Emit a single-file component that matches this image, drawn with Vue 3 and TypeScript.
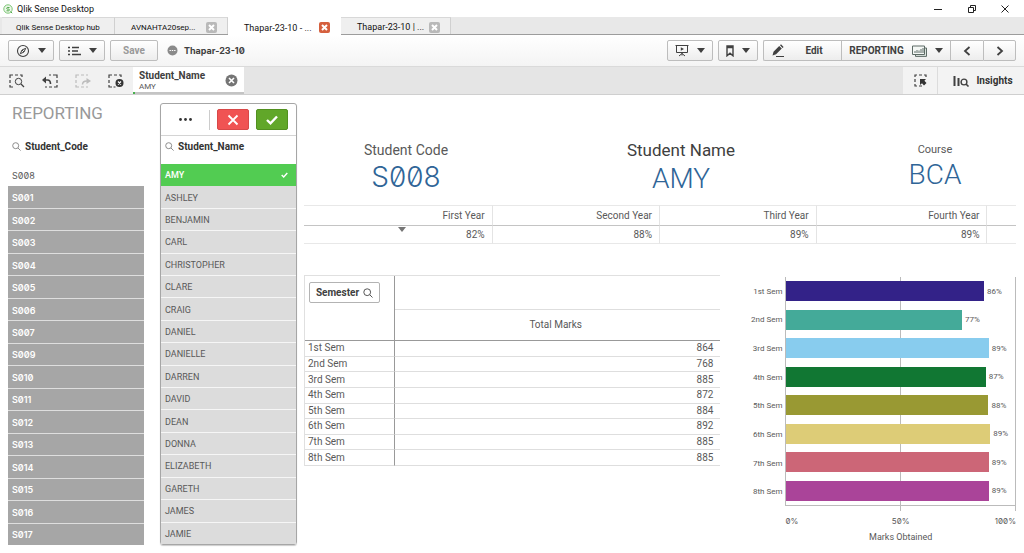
<script setup lang="ts">
interface Tab { label: string; closable: boolean; active: boolean }
interface Semester { name: string; marks: number; percent: string; color: string }

const tabs: Tab[] = [
  { label: 'Qlik Sense Desktop hub', closable: false, active: false },
  { label: 'AVNAHTA20sep...', closable: true, active: false },
  { label: 'Thapar-23-10 - ...', closable: true, active: true },
  { label: 'Thapar-23-10 | ...', closable: true, active: false },
]

const codes: string[] = [
  'S008', 'S001', 'S002', 'S003', 'S004', 'S005', 'S006', 'S007', 'S009',
  'S010', 'S011', 'S012', 'S013', 'S014', 'S015', 'S016', 'S017',
]

const names: string[] = [
  'AMY', 'ASHLEY', 'BENJAMIN', 'CARL', 'CHRISTOPHER', 'CLARE', 'CRAIG', 'DANIEL', 'DANIELLE',
  'DARREN', 'DAVID', 'DEAN', 'DONNA', 'ELIZABETH', 'GARETH', 'JAMES', 'JAMIE',
]

const kpis = [
  { label: 'Student Code', value: 'S008', kind: 'code' },
  { label: 'Student Name', value: 'AMY', kind: 'name' },
  { label: 'Course', value: 'BCA', kind: 'course' },
]

const years = [
  { label: 'First Year', value: '82%' },
  { label: 'Second Year', value: '88%' },
  { label: 'Third Year', value: '89%' },
  { label: 'Fourth Year', value: '89%' },
]

const semesters: Semester[] = [
  { name: '1st Sem', marks: 864, percent: '86%', color: '#332288' },
  { name: '2nd Sem', marks: 768, percent: '77%', color: '#44aa99' },
  { name: '3rd Sem', marks: 885, percent: '89%', color: '#88ccee' },
  { name: '4th Sem', marks: 872, percent: '87%', color: '#117733' },
  { name: '5th Sem', marks: 884, percent: '88%', color: '#999933' },
  { name: '6th Sem', marks: 892, percent: '89%', color: '#ddcc77' },
  { name: '7th Sem', marks: 885, percent: '89%', color: '#cc6677' },
  { name: '8th Sem', marks: 885, percent: '89%', color: '#aa4499' },
]
</script>

<template>
  <div class="app">
    <header class="titlebar">
      <svg class="logo" width="10" height="10" viewBox="0 0 10 10" aria-hidden="true">
        <circle cx="5" cy="5" r="4.2" fill="#eef8ea" stroke="#7cc576" />
        <path d="M6.5 3.5H4.2a.9.9 0 0 0 0 1.6h1.6a.9.9 0 0 1 0 1.7H3.5M7.6 7.6l1.6 1.6" fill="none" stroke="#4fa84a" />
      </svg>
      <span class="app-name">Qlik Sense Desktop</span>
      <div class="window-controls">
        <button type="button" aria-label="Minimize">
          <svg width="10" height="10" viewBox="0 0 10 10"><path d="M1 5.5h8" stroke="#222" /></svg>
        </button>
        <button type="button" aria-label="Restore">
          <svg width="10" height="10" viewBox="0 0 10 10"><path d="M1.5 3.5h5v5h-5zM3.5 3.5v-2h5v5h-2" fill="none" stroke="#222" /></svg>
        </button>
        <button type="button" aria-label="Close">
          <svg width="10" height="10" viewBox="0 0 10 10"><path d="M1.5 1.5l7 7M8.5 1.5l-7 7" stroke="#222" /></svg>
        </button>
      </div>
    </header>

    <nav class="tabs" aria-label="Open apps">
      <div v-for="tab in tabs" :key="tab.label" class="tab" :class="{ active: tab.active }">
        <button type="button" class="tab-label">{{ tab.label }}</button>
        <button v-if="tab.closable" type="button" class="tab-close" aria-label="Close tab">
          <svg width="7" height="7" viewBox="0 0 7 7"><path d="M1 1l5 5M6 1L1 6" stroke="#fff" stroke-width="2" /></svg>
        </button>
      </div>
    </nav>

    <div class="toolbar">
      <button type="button" class="tool w46" aria-label="Navigation">
        <svg width="14" height="14" viewBox="0 0 14 14" fill="none" stroke="#404040">
          <circle cx="7" cy="7" r="5.5" stroke-width="1.1" />
          <path d="M9.7 4.3L8 8 4.3 9.7 6 6z" /><path d="M6 6l2 2" />
        </svg>
        <i class="caret" />
      </button>
      <button type="button" class="tool w46" aria-label="Menu">
        <svg width="13" height="10" viewBox="0 0 13 10">
          <path d="M0 1.5h2M0 5h2M0 8.5h2M4 1.5h7M4 5h6M4 8.5h9" stroke="#404040" stroke-width="1.6" />
        </svg>
        <i class="caret" />
      </button>
      <button type="button" class="tool w48 save" disabled>Save</button>
      <svg class="status" width="11" height="11" viewBox="0 0 11 11" aria-hidden="true">
        <circle cx="5.5" cy="5.5" r="5" fill="#8a8a8a" />
        <path d="M2.5 5.5h1.4M4.8 5.5h1.4M7.1 5.5h1.4" stroke="#fff" stroke-width="1.2" />
      </svg>
      <h1 class="doc-name">Thapar-23-10</h1>

      <button type="button" class="tool w46 push" aria-label="Storytelling">
        <svg width="14" height="13" viewBox="0 0 14 13" fill="none" stroke="#404040">
          <path d="M.5 1.5h13M1.5 1.5v7h11v-7M7 8.500v3M4 12l3-2.5L10 12" />
          <path d="M5.8 3.2v3.6L9 5z" fill="#404040" stroke="none" />
        </svg>
        <i class="caret" />
      </button>
      <button type="button" class="tool w40" aria-label="Bookmarks">
        <svg width="8" height="12" viewBox="0 0 8 12"><path d="M1 1h6v9.8L4 8.2 1 10.8zM1 2.5h6" fill="none" stroke="#404040" stroke-width="1.4" /></svg>
        <i class="caret" />
      </button>
      <div class="group">
        <button type="button" class="tool edit">
          <svg width="13" height="13" viewBox="0 0 13 13">
            <path d="M.5 11.5l1-3.8 5.7-5.7 2.600 2.600L4.100 10.300zM8 1.300l1-1 2.600 2.600-1 1z" fill="#404040" />
            <path d="M4 12.500h8" stroke="#404040" />
          </svg>
          <span>Edit</span>
        </button>
        <button type="button" class="tool sheet">
          <span>REPORTING</span>
          <svg width="15" height="12" viewBox="0 0 15 12" fill="none" stroke="#5d6b66">
            <path d="M3.5 9.5v1.9h11V3h-2" fill="#dde5e0" />
            <path d="M.5 1h12v8.5H.5z" fill="#f4f7f5" />
            <path d="M3 8V6M5 8V5M7 8V5.5M9 8V4M11 8V3" />
          </svg>
          <i class="caret" />
        </button>
        <button type="button" class="tool step" aria-label="Previous sheet">
          <svg width="8" height="10" viewBox="0 0 8 10"><path d="M6.5 1L2 5l4.5 4" fill="none" stroke="#404040" stroke-width="1.8" /></svg>
        </button>
        <button type="button" class="tool step" aria-label="Next sheet">
          <svg width="8" height="10" viewBox="0 0 8 10"><path d="M1.5 1L6 5 1.5 9" fill="none" stroke="#404040" stroke-width="1.8" /></svg>
        </button>
      </div>
    </div>

    <div class="selections">
      <div class="sel-tools">
        <button type="button" aria-label="Selections search">
          <svg width="16" height="14" viewBox="0 0 16 14" fill="none" stroke="#404040">
            <path d="M1 4V1h3M6 1h3M11 1h2v2M1 6v3M1 11v2h3" stroke-width="1.2" />
            <circle cx="9.5" cy="7.5" r="3.2" /><path d="M12 10l3 3" stroke-width="1.3" />
          </svg>
        </button>
        <button type="button" aria-label="Step back">
          <svg width="16" height="14" viewBox="0 0 16 14" fill="none" stroke="#404040">
            <path d="M7 1h2M11 1h4v3M15 6v3M15 11v2h-3M10 13H7M5 13H3" stroke-width="1.2" />
            <path d="M3 6h2.5C8 6 8.5 8 8.5 10" stroke-width="1.6" /><path d="M4 2.5v7L0 6z" fill="#404040" stroke="none" />
          </svg>
        </button>
        <button type="button" aria-label="Step forward" disabled>
          <svg width="16" height="14" viewBox="0 0 16 14" fill="none" stroke="#bcbcbc">
            <path d="M1 4V1h3M6 1h3M11 1h2M1 6v3M1 11v2h3M6 13h3M11 13h2" stroke-width="1.2" />
            <path d="M7.5 10.5C7.5 8 9 7 12 7" stroke-width="1.5" /><path d="M11.5 4v6L16 7z" fill="#bcbcbc" stroke="none" />
          </svg>
        </button>
        <button type="button" aria-label="Clear all selections">
          <svg width="16" height="14" viewBox="0 0 16 14" fill="none" stroke="#404040">
            <path d="M1 4V1h3M6 1h3M11 1h2v2M1 6v3M1 11v2h3M5.5 13h2" stroke-width="1.2" />
            <circle cx="11.5" cy="9" r="4" fill="#333" stroke="none" /><path d="M10 7.5l3 3M13 7.5l-3 3" stroke="#fff" stroke-width="1.2" />
          </svg>
        </button>
      </div>
      <div class="chip">
        <div class="chip-text">
          <strong>Student_Name</strong>
          <span>AMY</span>
        </div>
        <button type="button" aria-label="Clear Student_Name">
          <svg width="13" height="13" viewBox="0 0 13 13">
            <circle cx="6.5" cy="6.5" r="6" fill="#757575" /><path d="M4 4l5 5M9 4L4 9" stroke="#fff" stroke-width="1.6" />
          </svg>
        </button>
      </div>
      <div class="sel-right">
        <button type="button" class="sel-mode" aria-label="Selections tool">
          <svg width="13" height="13" viewBox="0 0 13 13" fill="none" stroke="#404040">
            <path d="M1 3V1h2M5 1h3M10 1h2v2M1 5v3M1 10v2h2M5 12h3" stroke-width="1.2" />
            <path d="M6 5h6l-1.6 1.8L12.5 9 10 11.5 8 9.3 6 11z" fill="#333" stroke="none" />
          </svg>
        </button>
        <button type="button" class="insights">
          <svg width="17" height="12" viewBox="0 0 17 12" fill="none" stroke="#404040">
            <path d="M1.5 1v10M5.5 3v8" stroke-width="2" />
            <circle cx="11" cy="7" r="2.9" stroke-width="1.4" /><path d="M13 9l2.5 2.5" stroke-width="1.6" />
          </svg>
          <span>Insights</span>
        </button>
      </div>
    </div>

    <main class="sheet-body">
      <section class="filter codes">
        <h2>REPORTING</h2>
        <div class="field">
          <svg width="9" height="9" viewBox="0 0 9 9"><circle cx="3.7" cy="3.7" r="3" fill="none" stroke="#8c8c8c" /><path d="M6 6l2.6 2.6" stroke="#8c8c8c" /></svg>
          <strong>Student_Code</strong>
        </div>
        <ul>
          <li v-for="(code, i) in codes" :key="code" :class="{ possible: i === 0 }">
            <button type="button">{{ code }}</button>
          </li>
        </ul>
      </section>

      <section class="filter names">
        <div class="popup-actions">
          <button type="button" class="more" aria-label="More options">
            <svg width="13" height="3" viewBox="0 0 13 3" fill="#333"><circle cx="1.5" cy="1.5" r="1.4" /><circle cx="6.5" cy="1.5" r="1.4" /><circle cx="11.5" cy="1.5" r="1.4" /></svg>
          </button>
          <button type="button" class="cancel" aria-label="Cancel selection">
            <svg width="12" height="12" viewBox="0 0 12 12"><path d="M1.5 1.5l9 9M10.5 1.5l-9 9" stroke="#fff" stroke-width="1.8" /></svg>
          </button>
          <button type="button" class="confirm" aria-label="Confirm selection">
            <svg width="12" height="10" viewBox="0 0 12 10"><path d="M1 5l3.5 3.3L11 1.5" fill="none" stroke="#fff" stroke-width="2.4" /></svg>
          </button>
        </div>
        <div class="field">
          <svg width="9" height="9" viewBox="0 0 9 9"><circle cx="3.7" cy="3.7" r="3" fill="none" stroke="#8c8c8c" /><path d="M6 6l2.6 2.6" stroke="#8c8c8c" /></svg>
          <strong>Student_Name</strong>
        </div>
        <ul>
          <li v-for="(name, i) in names" :key="name" :class="{ selected: i === 0 }">
            <button type="button">
              <span>{{ name }}</span>
              <svg v-if="i === 0" width="7" height="6" viewBox="0 0 7 6"><path d="M.7 3l2 2L6.3 1" fill="none" stroke="#fff" stroke-width="1.4" /></svg>
            </button>
          </li>
        </ul>
      </section>

      <section class="dashboard">
        <div class="kpis">
          <div v-for="kpi in kpis" :key="kpi.kind" class="kpi" :class="kpi.kind">
            <span class="kpi-label">{{ kpi.label }}</span>
            <span class="kpi-value">{{ kpi.value }}</span>
          </div>
        </div>

        <table class="years">
          <colgroup><col class="y1"><col class="y2"><col class="y3"><col class="y4"><col></colgroup>
          <thead>
            <tr><th v-for="year in years" :key="year.label" scope="col">{{ year.label }}</th><td /></tr>
          </thead>
          <tbody>
            <tr>
              <td v-for="(year, i) in years" :key="year.label"><i v-if="i === 0" class="sort" />{{ year.value }}</td>
              <td />
            </tr>
          </tbody>
        </table>

        <div class="lower">
          <table class="pivot">
            <colgroup><col class="dim"><col></colgroup>
            <thead>
              <tr class="top">
                <th rowspan="2" class="dim-head">
                  <button type="button">
                    Semester
                    <svg width="10" height="10" viewBox="0 0 10 10" fill="none" stroke="#555"><circle cx="4.2" cy="4.2" r="3.4" /><path d="M6.7 6.7l2.8 2.8" /></svg>
                  </button>
                </th>
                <td />
              </tr>
              <tr class="measure"><th scope="col">Total Marks</th></tr>
            </thead>
            <tbody>
              <tr v-for="s in semesters" :key="s.name">
                <th scope="row">{{ s.name }}</th>
                <td>{{ s.marks }}</td>
              </tr>
            </tbody>
          </table>

          <figure class="chart">
            <div class="labels">
              <span v-for="s in semesters" :key="s.name">{{ s.name }}</span>
            </div>
            <div class="plot">
              <div v-for="s in semesters" :key="s.name" class="bar-row">
                <div class="bar" :style="{ width: s.marks / 10 + '%', background: s.color }" />
                <span class="bar-value">{{ s.percent }}</span>
              </div>
            </div>
            <div class="axis"><span>0%</span><span>50%</span><span>100%</span></div>
            <figcaption>Marks Obtained</figcaption>
          </figure>
        </div>
      </section>
    </main>
  </div>
</template>

<style>
body { margin: 0; background: #fff; }
</style>

<style scoped>
* { box-sizing: border-box; }
.app {
  display: flex;
  flex-direction: column;
  min-height: 100vh;
  font-family: Roboto, "Liberation Sans", sans-serif;
  font-size: 10px;
  color: #595959;
}
button {
  display: flex;
  align-items: center;
  justify-content: center;
  padding: 0;
  border: 0;
  background: none;
  font: inherit;
  color: inherit;
}
svg { flex: none; display: block; }

.titlebar { display: flex; align-items: center; height: 17px; padding: 0 3px; }
.app-name { margin-left: 4px; font-size: 9px; color: #111; }
.window-controls { display: flex; margin-left: auto; }
.window-controls button { width: 34px; height: 15px; }
.window-controls button:last-child { width: 32px; }

.tabs {
  display: flex;
  height: 18px;
  padding-left: 2px;
  background: #e8e8e8;
  border-bottom: 1px solid #9c9c9c;
}
.tab {
  display: flex;
  align-items: center;
  justify-content: space-between;
  width: 113px;
  height: 17px;
  padding: 2px 10px 0 16px;
  background: #efefef;
  border-top: 1px solid #d8d8d8;
  border-right: 1px solid #d0d0d0;
  color: #111;
  font-size: 9px;
  white-space: nowrap;
}
.tab:first-child { padding-left: 14px; font-size: 8px; }
.tab:nth-child(2) { font-size: 8px; }
.tab:last-child { width: 110px; }
.tab.active { height: 18px; background: #fff; border-color: #fff; }
.tab-close { width: 11px; height: 11px; border-radius: 2px; background: #b9b9b9; }
.active .tab-close { background: #d5603e; }

.toolbar {
  display: flex;
  align-items: center;
  height: 31px;
  padding: 0 8px;
  background: linear-gradient(#fff, #f4f4f4);
}
.tool {
  height: 21px;
  margin-right: 5px;
  border: 1px solid #bdbdbd;
  border-radius: 2px;
  background: linear-gradient(#fff, #ededed);
  gap: 8px;
  color: #404040;
  font-weight: 700;
}
.w46 { width: 46px; }
.w48 { width: 48px; }
.w40 { width: 40px; }
.push { margin-left: auto; }
.save { color: #999; }
.caret {
  width: 0;
  height: 0;
  border: 4px solid transparent;
  border-top: 5px solid #404040;
  border-bottom: 0;
}
.status { margin-left: 4px; }
.doc-name {
  margin: 0 0 0 6px;
  font: 700 9px/14px Inter, sans-serif;
  font-feature-settings: "zero";
  color: #404040;
}
.group { display: flex; }
.group .tool { margin: 0; border-right-width: 0; border-radius: 0; }
.group .tool:first-child { border-radius: 2px 0 0 2px; }
.group .tool:last-child { border-right-width: 1px; border-radius: 0 2px 2px 0; }
.edit { width: 78px; }
.group .edit { gap: 20px; padding-right: 10px; }
.sheet { width: 109px; }
.step { width: 33px; }

.selections {
  display: flex;
  height: 29px;
  background: #e5e5e5;
  border-top: 1px solid #dadada;
  border-bottom: 1px solid #cfcfcf;
}
.sel-tools { display: flex; width: 133px; background: #f1f1f1; }
.sel-tools button { flex: 1; }
.chip {
  display: flex;
  align-items: center;
  justify-content: space-between;
  width: 111px;
  padding: 0 6px;
  background: linear-gradient(90deg, #46b04c 2px, #c4c4c4 2px) bottom / 100% 2px no-repeat #fff;
}
.chip-text { display: flex; flex-direction: column; font-size: 8px; line-height: 9px; }
.chip-text strong { font-size: 10px; line-height: 12px; color: #404040; }
.sel-right { display: flex; margin-left: auto; background: #f3f3f3; }
.sel-mode { width: 35px; border-right: 1px solid #dcdcdc; }
.insights { width: 86px; gap: 6px; padding-left: 4px; font-weight: 700; color: #333; }

.sheet-body { flex: 1; display: flex; padding: 8px; }
.filter { display: flex; flex-direction: column; width: 136px; }
.filter h2 {
  flex: none;
  height: 33px;
  margin: 0;
  padding-left: 4px;
  font-size: 17px;
  font-weight: 400;
  line-height: 20px;
  color: #999;
}
.field { display: flex; flex: none; align-items: center; gap: 4px; height: 28px; padding: 0 4px 8px; color: #333; }
.filter ul { display: flex; flex: 1; flex-direction: column; margin: 0; padding: 0; list-style: none; }
.filter li { display: flex; flex: 1; border-bottom: 1px solid #dedede; background: #a6a6a6; }
.filter li:last-child { border-bottom: 0; }
.filter li button { flex: 1; justify-content: space-between; padding: 1px 8px 0 4px; font-size: 9px; }
.codes li { font-family: Inter, sans-serif; font-feature-settings: "zero"; font-weight: 600; color: #fff; }
.filter .possible { background: #fff; border-color: #fff; color: #595959; font-weight: 400; }
.names { width: 137px; margin-left: 16px; border: 1px solid #a6a6a6; border-radius: 3px; box-shadow: 0 1px 1px #ccc; }
.names li { background: #dcdcdc; border-color: #f6f6f6; }
.names .selected { background: #52cc52; border-color: #52cc52; color: #fff; font-weight: 500; }
.popup-actions { display: flex; flex: none; align-items: center; gap: 7px; height: 32px; padding-right: 8px; border-bottom: 1px solid #d4d4d4; }
.more { flex: 1; height: 20px; border-right: 1px solid #ccc; }
.cancel, .confirm { width: 32px; height: 21px; border-radius: 2px; }
.cancel { background: #f05353; border: 1px solid #d84848; }
.confirm { background: #61a729; border: 1px solid #529020; }

.dashboard { display: flex; flex: 1; flex-direction: column; min-width: 0; margin-left: 7px; }
.kpis { display: grid; grid-template-columns: 204fr 346fr 162fr; height: 102px; padding-top: 26px; }
.kpi { display: flex; flex-direction: column; align-items: center; justify-content: center; }
.kpi-label { font-size: 14px; line-height: 20px; }
.kpi-value { font-size: 28px; font-weight: 300; line-height: 34px; color: #2f6597; }
.code .kpi-value { font-family: Inter, sans-serif; font-feature-settings: "zero"; }
.name .kpi-label { font-size: 17px; line-height: 24px; color: #404040; }
.course .kpi-label { font-size: 11px; line-height: 16px; }

table { border-collapse: separate; border-spacing: 0; table-layout: fixed; }
th { font-weight: 400; }
.years { width: 100%; text-align: right; }
.y1 { width: 26.5%; }
.y2 { width: 23.5%; }
.y3 { width: 22%; }
.y4 { width: 24%; }
.years th, .years td { position: relative; height: 18px; padding: 0 7px; border-right: 1px solid #e4e4e4; border-bottom: 1px solid #e8e8e8; }
.years thead th, .years thead td { height: 21px; border-top: 1px solid #e8e8e8; border-bottom-color: #c4c4c4; }
.years tr > :last-child { border-right: 0; }
.sort { position: absolute; top: 1px; left: 50%; border: 4px solid transparent; border-top: 5px solid #757575; border-bottom: 0; }

.lower { display: flex; flex: 1; align-items: flex-start; gap: 16px; margin-top: 31px; }
.pivot { flex: 416; height: 191px; border-top: 1px solid #e0e0e0; border-left: 1px solid #e0e0e0; }
.dim { width: 90px; }
.pivot th, .pivot td { padding: 0 7px 0 3px; border-bottom: 1px solid #dedede; line-height: 14px; }
.pivot .top { height: 34px; }
.pivot .measure { height: 31px; }
.pivot .dim-head { padding: 6px 4px; vertical-align: top; border-right: 1px solid #999; border-bottom-color: #999; }
.dim-head button { width: 71px; height: 21px; gap: 4px; border: 1px solid #b3b3b3; border-radius: 2px; font-weight: 700; color: #404040; }
.pivot .measure th { border-bottom-color: #999; }
.pivot tbody th { text-align: left; border-right: 1px solid #999; }
.pivot tbody td { text-align: right; }

.chart {
  flex: 280;
  align-self: stretch;
  display: grid;
  grid-template-columns: 49px 1fr;
  grid-template-rows: 1fr 23px 16px;
  margin: 0;
  padding-top: 2px;
  font-size: 8px;
}
.labels { display: flex; flex-direction: column; }
.labels span { display: flex; flex: 1; align-items: center; justify-content: flex-end; padding-right: 3px; }
.plot {
  display: flex;
  flex-direction: column;
  border: 1px solid #bbb;
  border-top: 0;
  background: linear-gradient(#bbb, #bbb) center / 1px 100% no-repeat;
}
.bar-row { display: flex; flex: 1; align-items: center; }
.bar { flex: none; height: 20px; }
.bar-value { margin-left: 3px; }
.axis {
  grid-column: 2;
  display: flex;
  justify-content: space-between;
  padding-top: 7px;
  background:
    linear-gradient(#bbb, #bbb) center top / 1px 5px no-repeat,
    linear-gradient(#bbb, #bbb) right top / 1px 5px no-repeat;
  font-family: Inter, sans-serif;
  font-feature-settings: "zero";
  line-height: 16px;
}
.axis span:first-child, .axis span:last-child { width: 24px; }
.axis span:last-child { text-align: right; }
figcaption { grid-column: 2; font-size: 9px; line-height: 16px; text-align: center; }
</style>
